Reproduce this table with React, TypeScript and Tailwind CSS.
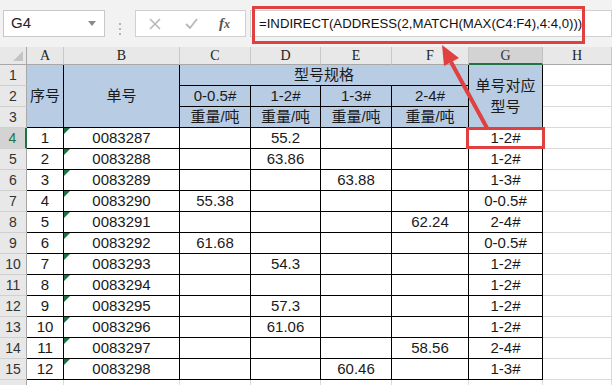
import React from "react";

const CJK = '"Liberation Sans","Noto Sans CJK SC",sans-serif';

type Row = { n: number; id: string; c?: string; d?: string; e?: string; f?: string; g: string };
const rows: Row[] = [
  { n: 1, id: "0083287", d: "55.2", g: "1-2#" },
  { n: 2, id: "0083288", d: "63.86", g: "1-2#" },
  { n: 3, id: "0083289", e: "63.88", g: "1-3#" },
  { n: 4, id: "0083290", c: "55.38", g: "0-0.5#" },
  { n: 5, id: "0083291", f: "62.24", g: "2-4#" },
  { n: 6, id: "0083292", c: "61.68", g: "0-0.5#" },
  { n: 7, id: "0083293", d: "54.3", g: "1-2#" },
  { n: 8, id: "0083294", g: "1-2#" },
  { n: 9, id: "0083295", d: "57.3", g: "1-2#" },
  { n: 10, id: "0083296", d: "61.06", g: "1-2#" },
  { n: 11, id: "0083297", f: "58.56", g: "2-4#" },
  { n: 12, id: "0083298", e: "60.46", g: "1-3#" },
];

const colLetters = ["A", "B", "C", "D", "E", "F", "G", "H"];

function RowHead({ n, sel }: { n?: number; sel?: boolean }) {
  return (
    <div
      className={
        "flex items-center justify-center text-[14px] border-b border-b-[#d0d0d0] " +
        (sel
          ? "bg-[#d3d3d3] text-[#217346] border-r-2 border-r-[#217346]"
          : "bg-[#e8e8e8] text-[#333] border-r border-r-[#a8a8a8]")
      }
      style={{ fontFamily: '"Liberation Sans",sans-serif' }}
    >
      {n}
    </div>
  );
}

function Cell({ children, cls = "" }: { children?: React.ReactNode; cls?: string }) {
  return (
    <div className={"flex items-center justify-center border-r border-b border-black text-[15px] text-[#1a1a1a] " + cls}>
      {children}
    </div>
  );
}

export default function App() {
  return (
    <div className="relative w-[612px] h-[385px] overflow-hidden bg-white" style={{ fontFamily: CJK }}>
      {/* formula bar */}
      <div className="flex h-[47px] bg-[#f2f2f2] pt-[10px]">
        <div className="ml-[3px] w-[102px] h-[27px] bg-white border border-[#c8c8c8] flex items-center justify-between pl-[7px] pr-[8px]">
          <span className="text-[15px] text-[#222]">G4</span>
          <svg width="8" height="5" viewBox="0 0 8 5">
            <polygon points="0,0 8,0 4,5" fill="#8a8a8a" />
          </svg>
        </div>
        <div className="w-[30px] flex flex-col items-center justify-center gap-[3px]">
          <div className="w-[2px] h-[2px] bg-[#b5b5b5]" />
          <div className="w-[2px] h-[2px] bg-[#b5b5b5]" />
          <div className="w-[2px] h-[2px] bg-[#b5b5b5]" />
        </div>
        <div className="w-[111px] h-[27px] bg-white border border-[#d0d0d0] flex items-center">
          <svg className="ml-[13px]" width="12" height="12" viewBox="0 0 12 12">
            <path d="M1 1 L11 11 M11 1 L1 11" stroke="#b8b8b8" strokeWidth="1.6" />
          </svg>
          <svg className="ml-[24px]" width="13" height="11" viewBox="0 0 13 11">
            <path d="M1 6 L5 10 L12 1" stroke="#b8b8b8" strokeWidth="1.8" fill="none" />
          </svg>
          <span
            className="ml-[21px] text-[15px] italic text-[#555] font-bold"
            style={{ fontFamily: '"Liberation Serif",serif' }}
          >
            f<span className="text-[12px]">x</span>
          </span>
        </div>
        <div className="ml-[4px] flex-1 h-[27px] bg-white border border-[#d0d0d0] flex items-center pl-[8px]">
          <span className="text-[13.2px] text-[#111] whitespace-nowrap" style={{ fontFamily: '"Liberation Sans",sans-serif' }}>
            =INDIRECT(ADDRESS(2,MATCH(MAX(C4:F4),4:4,0)))
          </span>
        </div>
      </div>

      {/* sheet */}
      <div className="grid grid-cols-[27px_37px_116px_71px_70px_71px_77px_74px_69px] grid-rows-[18px_repeat(16,21px)]">
        {/* column header row */}
        <div className="bg-[#e8e8e8] border-r border-b border-[#a8a8a8] relative">
          <svg className="absolute right-[3px] bottom-[3px]" width="10" height="10" viewBox="0 0 10 10">
            <polygon points="10,0 10,10 0,10" fill="#c4c4c4" />
          </svg>
        </div>
        {colLetters.map((l) => (
          <div
            key={l}
            className={
              "flex items-center justify-center text-[14px] " +
              (l === "G"
                ? "bg-[#d3d3d3] text-[#333] border-b-2 border-b-[#217346] border-r border-r-[#c0c0c0]"
                : "bg-[#e8e8e8] text-[#222] border-r border-r-[#c8c8c8] border-b border-b-[#a8a8a8]")
            }
            style={{ fontFamily: '"Liberation Serif",serif' }}
          >
            {l}
          </div>
        ))}

        {/* row 1 */}
        <RowHead n={1} />
        <Cell cls="row-span-3 bg-[#b8cce4]">序号</Cell>
        <Cell cls="row-span-3 bg-[#b8cce4]">单号</Cell>
        <Cell cls="col-span-4 bg-[#b8cce4]">型号规格</Cell>
        <Cell cls="row-span-3 bg-[#b8cce4] flex-col">
          <span className="leading-[21px]">单号对应</span>
          <span className="leading-[21px]">型号</span>
        </Cell>
        <div className="border-r border-b border-[#d9d9d9]" />

        {/* row 2 */}
        <RowHead n={2} />
        <Cell cls="bg-[#b8cce4]">0-0.5#</Cell>
        <Cell cls="bg-[#b8cce4]">1-2#</Cell>
        <Cell cls="bg-[#b8cce4]">1-3#</Cell>
        <Cell cls="bg-[#b8cce4]">2-4#</Cell>
        <div className="border-r border-b border-[#d9d9d9]" />

        {/* row 3 */}
        <RowHead n={3} />
        <Cell cls="bg-[#b8cce4]">重量/吨</Cell>
        <Cell cls="bg-[#b8cce4]">重量/吨</Cell>
        <Cell cls="bg-[#b8cce4]">重量/吨</Cell>
        <Cell cls="bg-[#b8cce4]">重量/吨</Cell>
        <div className="border-r border-b border-[#d9d9d9]" />

        {rows.map((r, i) => (
          <React.Fragment key={r.n}>
            <RowHead n={i + 4} sel={i === 0} />
            <Cell>{r.n}</Cell>
            <Cell cls="relative">
              <svg className="absolute left-0 top-0" width="6" height="6" viewBox="0 0 6 6">
                <polygon points="0,0 6,0 0,6" fill="#1e7145" />
              </svg>
              {r.id}
            </Cell>
            <Cell>{r.c}</Cell>
            <Cell>{r.d}</Cell>
            <Cell>{r.e}</Cell>
            <Cell>{r.f}</Cell>
            <Cell>{r.g}</Cell>
            <div className="border-r border-b border-[#d9d9d9]" />
          </React.Fragment>
        ))}

        {/* row 16 partial */}
        <RowHead />
        {colLetters.map((l) => (
          <div key={"r16" + l} className="border-r border-b border-[#d9d9d9]" />
        ))}
      </div>

      {/* red annotation boxes */}
      <div className="absolute left-[252px] top-[6px] w-[333px] h-[38px] border-[3px] border-[#e0403f]" />
      <div className="absolute left-[466px] top-[127px] w-[79px] h-[22px] border-[3px] border-[#e0403f]" />

      {/* arrow */}
      <svg className="absolute left-0 top-0 pointer-events-none" width="612" height="385" viewBox="0 0 612 385">
        <line x1="487" y1="128" x2="451" y2="62" stroke="#e0403f" strokeWidth="4" />
        <polygon points="442,45 459,58 444,66" fill="#e0403f" />
      </svg>
    </div>
  );
}
